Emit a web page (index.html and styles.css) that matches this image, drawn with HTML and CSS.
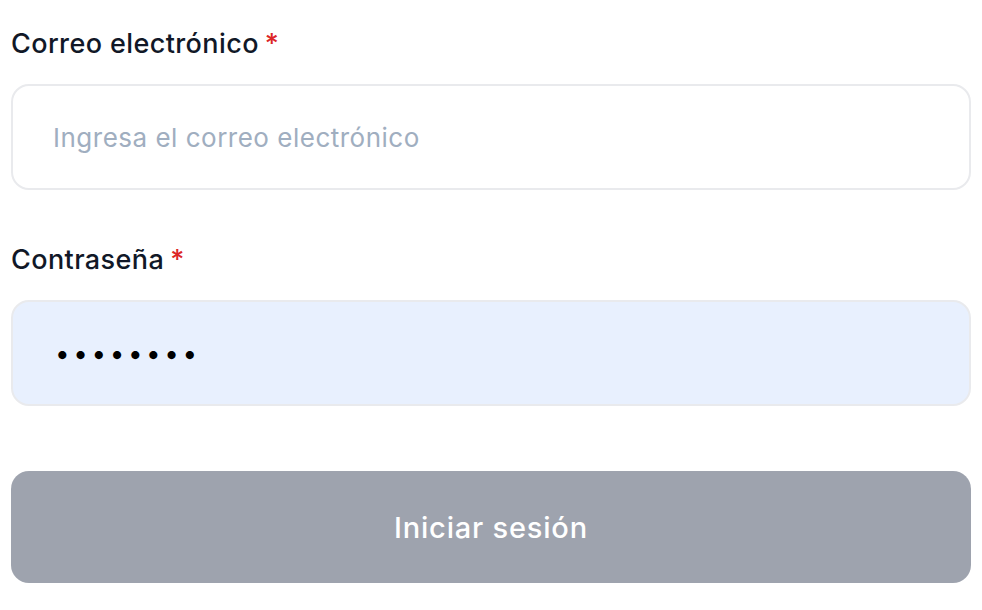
FILE: index.html
```html
<!DOCTYPE html>
<html lang="es">
<head>
<meta charset="utf-8">
<title>Iniciar sesión</title>
<link rel="stylesheet" href="styles.css">
</head>
<body>
<form class="form">
  <div class="field">
    <label class="label" for="email">Correo electrónico<span class="req">*</span></label>
    <input class="input" id="email" type="email" placeholder="Ingresa el correo electrónico">
  </div>
  <div class="field">
    <label class="label" for="pass">Contraseña<span class="req">*</span></label>
    <input class="input input-filled" id="pass" type="password" value="12345678">
  </div>
  <button class="btn" type="button">Iniciar sesión</button>
</form>
</body>
</html>
```

FILE: styles.css
```css
html, body {
  margin: 0;
  padding: 0;
  background: #ffffff;
}
body {
  font-family: Inter, "Noto Sans", "Liberation Sans", sans-serif;
}
.form {
  display: flex;
  flex-direction: column;
  padding: 24px 11px 0;
}
.field {
  display: flex;
  flex-direction: column;
  gap: 21px;
  margin-bottom: 50px;
}
.field + .field {
  margin-bottom: 65px;
}
.label {
  font-size: 27px;
  line-height: 39px;
  font-weight: 500;
  color: #111827;
  letter-spacing: 0.4px;
}
.req {
  color: #dc2626;
  margin-left: 6px;
}
.input {
  box-sizing: border-box;
  height: 106px;
  width: 100%;
  border: 2px solid #e9eaed;
  border-radius: 18px;
  background: #ffffff;
  padding: 0 40px;
  font-family: Inter, "Noto Sans", sans-serif;
  font-size: 26px;
  letter-spacing: 0.5px;
  color: #111827;
  outline: none;
}
.input::placeholder {
  color: #a0aec0;
  opacity: 1;
}
.input-filled {
  background: #e8f0fe;
  color: #000000;
  letter-spacing: 3.6px;
  padding-left: 42px;
}
.btn {
  height: 112px;
  width: 100%;
  border: none;
  border-radius: 18px;
  background: #9ea3ae;
  color: #ffffff;
  font-family: Inter, "Noto Sans", sans-serif;
  font-size: 29px;
  font-weight: 500;
  letter-spacing: 0.8px;
}
```
